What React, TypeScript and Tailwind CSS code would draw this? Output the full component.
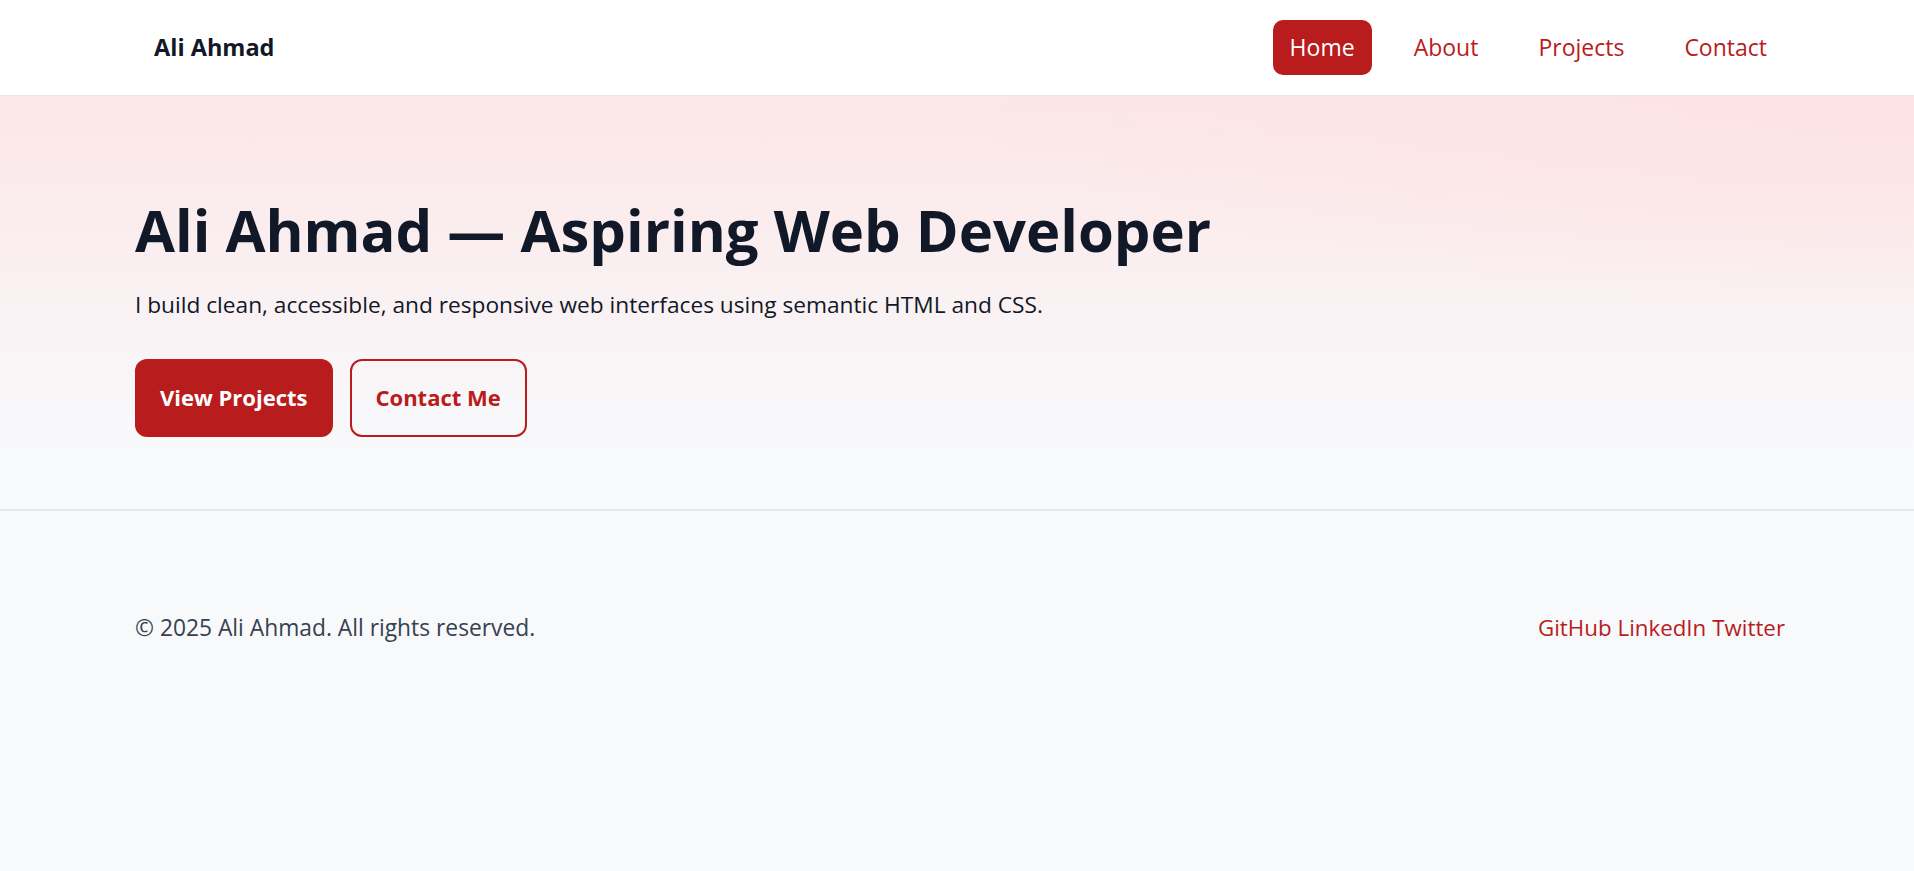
import React from "react";

export default function App() {
  const font = { fontFamily: '"Open Sans", "Noto Sans", sans-serif' };
  return (
    <div style={font} className="min-h-[871px] bg-[#f8f9fb] text-[#111827]">
      <header className="h-[96px] border-b border-[#e5e7eb] bg-white">
        <div className="mx-auto flex h-[95px] w-[1656px] items-center justify-between pl-[6px]">
          <a className="px-[19px] text-[23.5px] font-bold text-[#111827]">Ali Ahmad</a>
          <nav className="flex items-center gap-[24px]">
            <a className="flex h-[55px] items-center rounded-[10px] bg-[#b91c1c] px-[17px] text-[23px] text-white">Home</a>
            <a className="flex h-[55px] items-center px-[18px] text-[23px] text-[#b91c1c]">About</a>
            <a className="flex h-[55px] items-center px-[18px] text-[23px] text-[#b91c1c]">Projects</a>
            <a className="flex h-[55px] items-center px-[18px] text-[23px] text-[#b91c1c]">Contact</a>
          </nav>
        </div>
      </header>
      <section className="border-b-2 border-[#e5e7eb] bg-[radial-gradient(ellipse_at_top_right,#fde2e3_0%,rgba(253,226,227,0)_35%),linear-gradient(180deg,#fce6e7_0%,#f8f9fb_85%)]">
        <div className="mx-auto w-[1656px] pb-[72px] pl-[6px] pt-[99px]">
          <h1 className="text-[58px] font-bold leading-[1.2] text-[#111827]">Ali Ahmad — Aspiring Web Developer</h1>
          <p className="mt-[24px] text-[22.7px] leading-[32px] text-[#111827]">
            I build clean, accessible, and responsive web interfaces using semantic HTML and CSS.
          </p>
          <div className="mt-[38px] flex gap-[17px]">
            <a className="flex h-[78px] items-center rounded-[12px] bg-[#b91c1c] px-[25px] text-[22px] font-bold text-white">View Projects</a>
            <a className="flex h-[78px] items-center rounded-[12px] border-2 border-[#b91c1c] px-[24px] text-[22px] font-bold text-[#b91c1c]">Contact Me</a>
          </div>
        </div>
      </section>
      <footer>
        <div className="mx-auto flex w-[1656px] items-center justify-between pl-[6px] pt-[101px]">
          <p className="text-[22.8px] leading-[32px] text-[#374151]">© 2025 Ali Ahmad. All rights reserved.</p>
          <div className="flex gap-[6px] text-[22.3px] leading-[32px] text-[#b91c1c]">
            <a>GitHub</a>
            <a>LinkedIn</a>
            <a>Twitter</a>
          </div>
        </div>
      </footer>
    </div>
  );
}
